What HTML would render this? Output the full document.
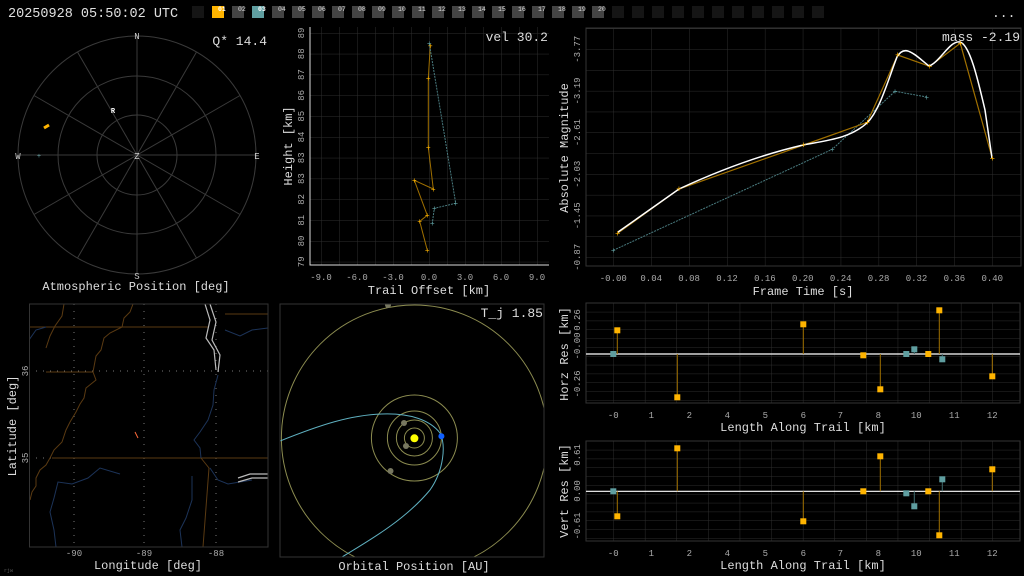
<!DOCTYPE html>
<html><head><meta charset="utf-8"><style>
html,body{margin:0;padding:0;background:#000;width:1024px;height:576px;overflow:hidden}
svg{display:block}
text{font-family:"Liberation Mono",monospace}
</style></head><body>
<svg width="1024" height="576" viewBox="0 0 1024 576" xmlns="http://www.w3.org/2000/svg">
<defs>
<pattern id="gh" x="321" y="33" width="18" height="20.8" patternUnits="userSpaceOnUse"><path d="M0 0V20.8M0 0H18" stroke="#2e2e2e" stroke-width="1" fill="none"/></pattern>
<pattern id="gm" x="613.3" y="49.3" width="37.9" height="20.8" patternUnits="userSpaceOnUse"><path d="M0 0V20.8M0 0H37.9" stroke="#2e2e2e" stroke-width="1" fill="none"/></pattern>
<pattern id="gr" x="613.3" y="303" width="31.6" height="8.83" patternUnits="userSpaceOnUse"><path d="M0 0V8.83M0 0H31.6" stroke="#2e2e2e" stroke-width="1" fill="none"/></pattern>
<pattern id="gv" x="613.3" y="441" width="31.6" height="8.83" patternUnits="userSpaceOnUse"><path d="M0 0V8.83M0 0H31.6" stroke="#2e2e2e" stroke-width="1" fill="none"/></pattern>
<clipPath id="cm"><rect x="29.5" y="304" width="238.5" height="243"/></clipPath>
<clipPath id="co"><rect x="280" y="304" width="264" height="253"/></clipPath>
</defs>

<!-- top bar -->
<text x="8" y="17" font-size="13.5" fill="#e0e0e0">20250928 05:50:02 UTC</text>
<g font-size="6.5" fill="#ddd">
<rect x="192" y="6" width="12" height="12" fill="#151515"/>
<rect x="212" y="6" width="12" height="12" fill="#ffb400"/><text x="218" y="11" fill="#fff" font-weight="bold">01</text>
<rect x="232" y="6" width="12" height="12" fill="#444"/><text x="238" y="11">02</text>
<rect x="252" y="6" width="12" height="12" fill="#5f9ea0"/><text x="258" y="11" fill="#fff" font-weight="bold">03</text>
<rect x="272" y="6" width="12" height="12" fill="#444"/><text x="278" y="11">04</text>
<rect x="292" y="6" width="12" height="12" fill="#444"/><text x="298" y="11">05</text>
<rect x="312" y="6" width="12" height="12" fill="#444"/><text x="318" y="11">06</text>
<rect x="332" y="6" width="12" height="12" fill="#444"/><text x="338" y="11">07</text>
<rect x="352" y="6" width="12" height="12" fill="#444"/><text x="358" y="11">08</text>
<rect x="372" y="6" width="12" height="12" fill="#444"/><text x="378" y="11">09</text>
<rect x="392" y="6" width="12" height="12" fill="#444"/><text x="398" y="11">10</text>
<rect x="412" y="6" width="12" height="12" fill="#444"/><text x="418" y="11">11</text>
<rect x="432" y="6" width="12" height="12" fill="#444"/><text x="438" y="11">12</text>
<rect x="452" y="6" width="12" height="12" fill="#444"/><text x="458" y="11">13</text>
<rect x="472" y="6" width="12" height="12" fill="#444"/><text x="478" y="11">14</text>
<rect x="492" y="6" width="12" height="12" fill="#444"/><text x="498" y="11">15</text>
<rect x="512" y="6" width="12" height="12" fill="#444"/><text x="518" y="11">16</text>
<rect x="532" y="6" width="12" height="12" fill="#444"/><text x="538" y="11">17</text>
<rect x="552" y="6" width="12" height="12" fill="#444"/><text x="558" y="11">18</text>
<rect x="572" y="6" width="12" height="12" fill="#444"/><text x="578" y="11">19</text>
<rect x="592" y="6" width="12" height="12" fill="#444"/><text x="598" y="11">20</text>
</g>
<g fill="#151515">
<rect x="612" y="6" width="12" height="12"/><rect x="632" y="6" width="12" height="12"/><rect x="652" y="6" width="12" height="12"/><rect x="672" y="6" width="12" height="12"/><rect x="692" y="6" width="12" height="12"/><rect x="712" y="6" width="12" height="12"/><rect x="732" y="6" width="12" height="12"/><rect x="752" y="6" width="12" height="12"/><rect x="772" y="6" width="12" height="12"/><rect x="792" y="6" width="12" height="12"/><rect x="812" y="6" width="12" height="12"/>
</g>
<text x="992" y="17" font-size="13" fill="#ddd">...</text>

<!-- polar plot -->
<g stroke="#3a3a3a" fill="none" stroke-width="1">
<circle cx="137" cy="155" r="40"/><circle cx="137" cy="155" r="79"/><circle cx="137" cy="155" r="119"/>
<line x1="137" y1="36" x2="137" y2="274"/><line x1="18" y1="155" x2="256" y2="155"/>
<line x1="77.5" y1="52" x2="196.5" y2="258"/><line x1="196.5" y1="52" x2="77.5" y2="258"/>
<line x1="34" y1="95.5" x2="240" y2="214.5"/><line x1="240" y1="95.5" x2="34" y2="214.5"/>
</g>
<g font-size="9" fill="#ccc" text-anchor="middle">
<text x="137" y="39">N</text><text x="137" y="279">S</text><text x="18" y="159">W</text><text x="257" y="159">E</text><text x="137" y="159">Z</text>
</g>
<text x="113" y="113" font-size="7" fill="#fff" font-weight="bold" text-anchor="middle">R</text>
<path d="M44 128L49 125" stroke="#ffb400" stroke-width="3"/>
<text x="39" y="158" font-size="7" fill="#5f9ea0" text-anchor="middle">+</text>
<text x="267" y="45" font-size="13" fill="#ddd" text-anchor="end">Q* 14.4</text>
<text x="136" y="290" font-size="12" fill="#ddd" text-anchor="middle">Atmospheric Position [deg]</text>

<!-- height plot -->
<rect x="310" y="27" width="239" height="238" fill="url(#gh)"/>
<path d="M310 27V265H549" stroke="#ddd" fill="none"/>
<polyline points="430.3,45.7 428.3,78.3 428.3,147.3 433.3,189 414.3,180.3 427.3,215.3 419.7,221.3 427.3,250.3" fill="none" stroke="#a07000" stroke-width="1"/>
<polyline points="429.3,43.3 455.7,203.3 434.3,208.3 432.3,223.3" fill="none" stroke="#4a7c80" stroke-width="1" stroke-dasharray="2,1"/>
<g font-size="8" fill="#ffb400" text-anchor="middle">
<text x="430.3" y="48.5">+</text><text x="428.3" y="81">+</text><text x="428.3" y="150">+</text><text x="433.3" y="192">+</text><text x="414.3" y="183">+</text><text x="427.3" y="218">+</text><text x="419.7" y="224">+</text><text x="427.3" y="253">+</text>
</g>
<g font-size="8" fill="#5f9ea0" text-anchor="middle">
<text x="429.3" y="46">+</text><text x="455.7" y="206">+</text><text x="434.3" y="211">+</text><text x="432.3" y="226">+</text>
</g>
<g font-size="9" fill="#aaa" text-anchor="middle">
<text x="321" y="280">-9.0</text><text x="357" y="280">-6.0</text><text x="393" y="280">-3.0</text><text x="429" y="280">0.0</text><text x="465" y="280">3.0</text><text x="501" y="280">6.0</text><text x="537" y="280">9.0</text>
</g>
<g font-size="9" fill="#aaa" text-anchor="middle">
<text transform="translate(304,33) rotate(-90)">89</text><text transform="translate(304,53.8) rotate(-90)">88</text><text transform="translate(304,74.6) rotate(-90)">87</text><text transform="translate(304,95.4) rotate(-90)">86</text><text transform="translate(304,116.2) rotate(-90)">85</text><text transform="translate(304,137) rotate(-90)">84</text><text transform="translate(304,157.8) rotate(-90)">83</text><text transform="translate(304,178.6) rotate(-90)">83</text><text transform="translate(304,199.4) rotate(-90)">82</text><text transform="translate(304,220.2) rotate(-90)">81</text><text transform="translate(304,241) rotate(-90)">80</text><text transform="translate(304,261.8) rotate(-90)">79</text>
</g>
<text transform="translate(292,146) rotate(-90)" font-size="12" fill="#ddd" text-anchor="middle">Height [km]</text>
<text x="429" y="294" font-size="12" fill="#ddd" text-anchor="middle">Trail Offset [km]</text>
<text x="548" y="41" font-size="13" fill="#ddd" text-anchor="end">vel 30.2</text>

<!-- magnitude plot -->
<rect x="586" y="28" width="435" height="238" fill="url(#gm)"/>
<rect x="586" y="28" width="435" height="238" fill="none" stroke="#333"/>
<polyline points="613.3,250.3 832.3,149.3 895,91.3 926.7,97" fill="none" stroke="#4a7c80" stroke-dasharray="2,1"/>
<polyline points="617.7,233.3 679,189 803.7,145 867.3,122.3 897.7,55 929.7,66.3 960.3,43.3 992.3,158.3" fill="none" stroke="#a07000" stroke-width="1.2"/>
<path d="M617.7 232.3 L679 189 C720 170 760 155 803 145 C830 140 850 138 867 123 C880 110 888 80 897 57 C905 43 915 55 929 66 C940 62 950 40 960 42 C970 45 978 80 985 110 L992 158" fill="none" stroke="#fff" stroke-width="1.5"/>
<g font-size="9" fill="#ffb400" text-anchor="middle">
<text x="617.7" y="236.3">+</text><text x="679" y="192">+</text><text x="803.7" y="148">+</text><text x="867.3" y="125.3">+</text><text x="897.7" y="58">+</text><text x="929.7" y="69.3">+</text><text x="960.3" y="46.3">+</text><text x="992.3" y="161.3">+</text>
</g>
<g font-size="8" fill="#5f9ea0" text-anchor="middle">
<text x="613.3" y="253">+</text><text x="832.3" y="152">+</text><text x="895" y="94">+</text><text x="926.7" y="100">+</text>
</g>
<g font-size="9" fill="#aaa" text-anchor="middle">
<text x="613.3" y="281">-0.00</text><text x="651.2" y="281">0.04</text><text x="689.1" y="281">0.08</text><text x="727" y="281">0.12</text><text x="764.9" y="281">0.16</text><text x="802.8" y="281">0.20</text><text x="840.7" y="281">0.24</text><text x="878.6" y="281">0.28</text><text x="916.5" y="281">0.32</text><text x="954.4" y="281">0.36</text><text x="992.3" y="281">0.40</text>
<text transform="translate(580,49.3) rotate(-90)">-3.77</text><text transform="translate(580,91) rotate(-90)">-3.19</text><text transform="translate(580,132.6) rotate(-90)">-2.61</text><text transform="translate(580,174.2) rotate(-90)">-2.03</text><text transform="translate(580,215.8) rotate(-90)">-1.45</text><text transform="translate(580,257.3) rotate(-90)">-0.87</text>
</g>
<text transform="translate(568,148) rotate(-90)" font-size="12" fill="#ddd" text-anchor="middle">Absolute Magnitude</text>
<text x="803" y="295" font-size="12" fill="#ddd" text-anchor="middle">Frame Time [s]</text>
<text x="1020" y="41" font-size="13" fill="#ddd" text-anchor="end">mass -2.19</text>

<!-- horz res -->
<rect x="586" y="303" width="434" height="100" fill="url(#gr)"/>
<rect x="586" y="303" width="434" height="100" fill="none" stroke="#333"/>
<line x1="586" y1="354" x2="1020" y2="354" stroke="#fff" stroke-width="1.2"/>
<g stroke="#a07000"><path d="M617.3 354V330.3M677.3 354V397.3M803.3 354V324.3M863.3 354V355.3M880.3 354V389.3M939.3 354V310.3M992.3 354V376.3"/></g>
<g stroke="#3f6a6c"><path d="M914.3 354V349.3M942.3 354V359.3"/></g>
<g fill="#ffb400"><rect x="614.3" y="327.3" width="6" height="6"/><rect x="674.3" y="394.3" width="6" height="6"/><rect x="800.3" y="321.3" width="6" height="6"/><rect x="860.3" y="352.3" width="6" height="6"/><rect x="877.3" y="386.3" width="6" height="6"/><rect x="925.3" y="351" width="6" height="6"/><rect x="936.3" y="307.3" width="6" height="6"/><rect x="989.3" y="373.3" width="6" height="6"/></g>
<g fill="#5f9ea0"><rect x="610.3" y="351" width="6" height="6"/><rect x="903.3" y="351" width="6" height="6"/><rect x="911.3" y="346.3" width="6" height="6"/><rect x="939.3" y="356.3" width="6" height="6"/></g>
<g font-size="9" fill="#aaa" text-anchor="middle">
<text x="613.3" y="418">-0</text><text x="651.3" y="418">1</text><text x="689.3" y="418">2</text><text x="727.3" y="418">4</text><text x="765.3" y="418">5</text><text x="803.3" y="418">6</text><text x="840.3" y="418">7</text><text x="878.3" y="418">8</text><text x="916.3" y="418">10</text><text x="954.3" y="418">11</text><text x="992.3" y="418">12</text>
<text transform="translate(580,320) rotate(-90)">0.26</text><text transform="translate(580,346) rotate(-90)">-0.00</text><text transform="translate(580,384) rotate(-90)">-0.26</text>
</g>
<text transform="translate(568,354) rotate(-90)" font-size="12" fill="#ddd" text-anchor="middle">Horz Res [km]</text>
<text x="803" y="431" font-size="12" fill="#ddd" text-anchor="middle">Length Along Trail [km]</text>

<!-- vert res -->
<rect x="586" y="441" width="434" height="100" fill="url(#gv)"/>
<rect x="586" y="441" width="434" height="100" fill="none" stroke="#333"/>
<line x1="586" y1="491.3" x2="1020" y2="491.3" stroke="#fff" stroke-width="1.2"/>
<g stroke="#a07000"><path d="M617.3 491.3V516.3M677.3 491.3V448.3M803.3 491.3V521.3M880.3 491.3V456.3M939.3 491.3V535.3M992.3 491.3V469.3"/></g>
<g stroke="#3f6a6c"><path d="M914.3 491.3V506.3M942.3 491.3V479.3"/></g>
<g fill="#ffb400"><rect x="614.3" y="513.3" width="6" height="6"/><rect x="674.3" y="445.3" width="6" height="6"/><rect x="800.3" y="518.3" width="6" height="6"/><rect x="860.3" y="488.3" width="6" height="6"/><rect x="877.3" y="453.3" width="6" height="6"/><rect x="925.3" y="488.3" width="6" height="6"/><rect x="936.3" y="532.3" width="6" height="6"/><rect x="989.3" y="466.3" width="6" height="6"/></g>
<g fill="#5f9ea0"><rect x="610.3" y="488.3" width="6" height="6"/><rect x="903.3" y="490.3" width="6" height="6"/><rect x="911.3" y="503.3" width="6" height="6"/><rect x="939.3" y="476.3" width="6" height="6"/></g>
<g font-size="9" fill="#aaa" text-anchor="middle">
<text x="613.3" y="556">-0</text><text x="651.3" y="556">1</text><text x="689.3" y="556">2</text><text x="727.3" y="556">4</text><text x="765.3" y="556">5</text><text x="803.3" y="556">6</text><text x="840.3" y="556">7</text><text x="878.3" y="556">8</text><text x="916.3" y="556">10</text><text x="954.3" y="556">11</text><text x="992.3" y="556">12</text>
<text transform="translate(580,455) rotate(-90)">0.61</text><text transform="translate(580,491) rotate(-90)">0.00</text><text transform="translate(580,526) rotate(-90)">-0.61</text>
</g>
<text transform="translate(568,491) rotate(-90)" font-size="12" fill="#ddd" text-anchor="middle">Vert Res [km]</text>
<text x="803" y="569" font-size="12" fill="#ddd" text-anchor="middle">Length Along Trail [km]</text>

<!-- map -->
<g clip-path="url(#cm)">
<g stroke="#777" stroke-dasharray="1,6" stroke-width="1"><path d="M74 304V547M144 304V547M216 304V547M29 371H268M29 458H268"/></g>
<g stroke="#5a3a12" fill="none" stroke-width="1">
<path d="M29 327H208"/><path d="M46 372H93"/><path d="M52 458H268"/><path d="M201 458L209 468L203 547"/>
<path d="M225 314H268"/>
<path d="M133 304L130 312L124 318L122 327L110 333L104 338L101 350L96 356L93 372L96 380L86 388L84 398L80 404L76 412L70 422L66 430L62 442L54 450L50 458L46 465L40 470L36 478L36 486L32 492L30 500"/>
<path d="M64 304L62 316L55 326L50 336L46 348"/>
</g>
<g stroke="#1c3358" fill="none" stroke-width="1">
<path d="M29 340L36 330L46 327"/>
<path d="M218 375L214 390L213 405L208 420L200 432L194 440L200 448L201 458"/>
<path d="M210 468L218 480L228 484L240 482L252 480"/>
<path d="M120 474L100 468L88 478L72 484L58 482L54 498L50 512L54 530L56 547"/>
<path d="M192 476L192 500L186 518L180 530L182 547"/>
<path d="M225 330L240 336L252 330L268 328"/>
</g>
<g stroke="#bbb" fill="none" stroke-width="1.2">
<path d="M205 304L210 320L206 338L214 350L216 370"/><path d="M210 304L216 322L212 340L220 355L218 372"/>
<path d="M238 478L250 474L268 474"/><path d="M238 482L252 478L268 478"/>
</g>
<path d="M135 432L138 438" stroke="#ff6a3a" stroke-width="1"/>
</g>
<rect x="29.5" y="304" width="238.5" height="243" fill="none" stroke="#333"/>
<g font-size="9" fill="#aaa" text-anchor="middle">
<text x="74" y="556">-90</text><text x="144" y="556">-89</text><text x="216" y="556">-88</text>
<text transform="translate(28,371) rotate(-90)">36</text><text transform="translate(28,458) rotate(-90)">35</text>
</g>
<text transform="translate(16,426) rotate(-90)" font-size="12" fill="#ddd" text-anchor="middle">Latitude [deg]</text>
<text x="148" y="569" font-size="12" fill="#ddd" text-anchor="middle">Longitude [deg]</text>
<text x="4" y="572" font-size="5" fill="#555">rjw</text>

<!-- orbital -->
<g clip-path="url(#co)">
<g fill="none" stroke="#8c8c50" stroke-width="1">
<circle cx="414.4" cy="438" r="10"/><circle cx="414.4" cy="438" r="18"/><circle cx="414.4" cy="438" r="27"/><circle cx="414.4" cy="438" r="43"/><circle cx="414.4" cy="438" r="133"/>
</g>
<path d="M280 441C320 425 350 415 382 414C410 413 430 420 440 433C446 445 444 470 430 490C405 520 370 540 342 557" fill="none" stroke="#5fb0c0" stroke-width="1"/>
<g fill="#777760"><circle cx="404" cy="423" r="3"/><circle cx="406" cy="446" r="3"/><circle cx="390.5" cy="471" r="3"/><circle cx="388" cy="305" r="3"/></g>
<circle cx="414.4" cy="438.3" r="4" fill="#ffff00"/>
<circle cx="441.4" cy="436.3" r="3" fill="#1060ff"/>
</g>
<rect x="280" y="304" width="264" height="253" fill="none" stroke="#333"/>
<text x="543" y="317" font-size="13" fill="#ddd" text-anchor="end">T_j 1.85</text>
<text x="414" y="570" font-size="12" fill="#ddd" text-anchor="middle">Orbital Position [AU]</text>
</svg>
</body></html>
